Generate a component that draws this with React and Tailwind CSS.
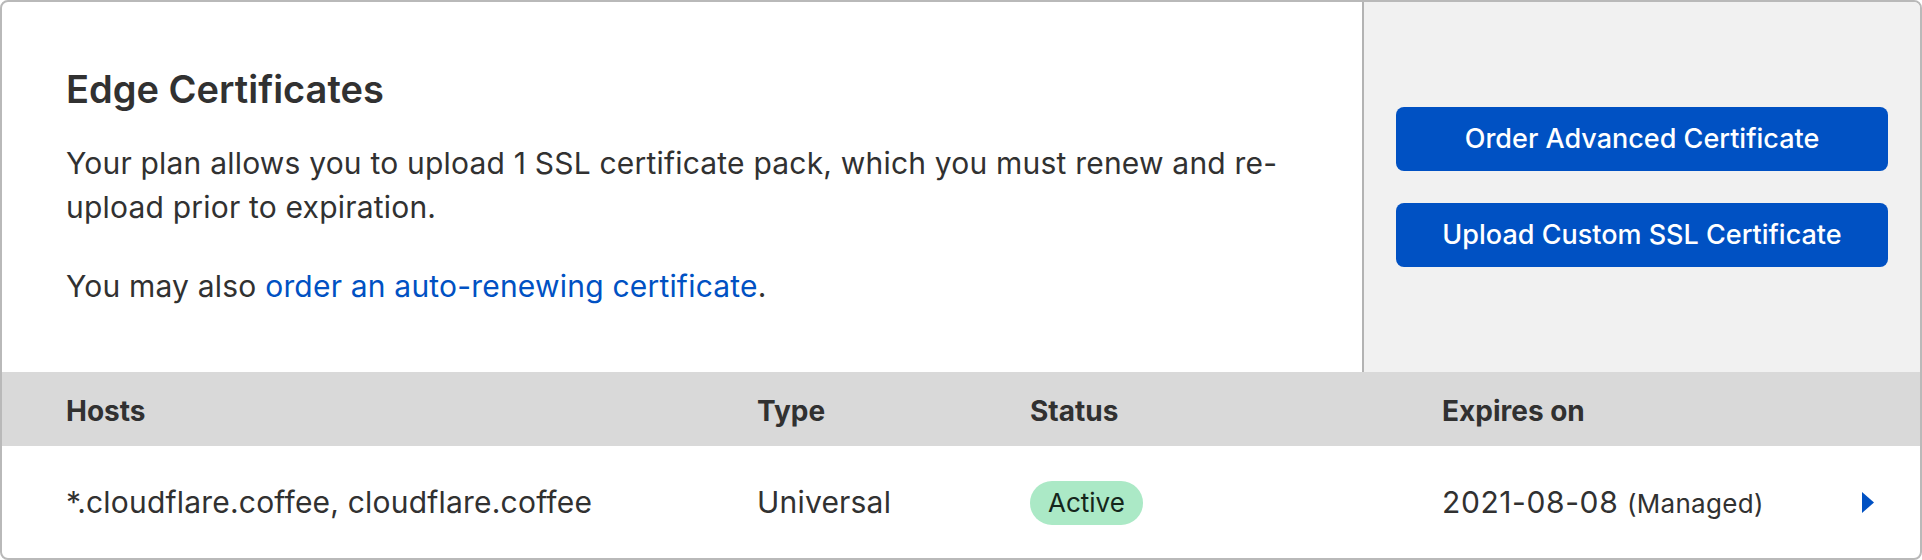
export default function App() {
  return (
    <div className="w-[1922px] h-[560px] bg-white font-['Inter',sans-serif] text-[#313131]">
      <div className="h-[560px] overflow-hidden rounded-[8px] border-2 border-[#b9b9b9] bg-white">
        <div className="flex h-[370px]">
          <div className="flex-1 px-16 pt-16">
            <h1 className="text-[38px] font-semibold leading-[46px]">Edge Certificates</h1>
            <p className="mt-[29px] text-[30px] leading-[44px] tracking-[0.2px]">
              Your plan allows you to upload 1 SSL certificate pack, which you must renew and re-upload prior to expiration.
            </p>
            <p className="mt-[35px] text-[30px] leading-[44px] tracking-[0.2px]">
              You may also <a href="#" className="text-[#0051c3]">order an auto-renewing certificate</a>.
            </p>
          </div>
          <div className="flex w-[558px] flex-col justify-center gap-8 border-l-2 border-[#b3b3b3] bg-[#f1f1f1] px-8">
            <button className="h-[64px] rounded-[8px] bg-[#0051c3] text-[27px] font-medium text-white">
              Order Advanced Certificate
            </button>
            <button className="h-[64px] rounded-[8px] bg-[#0051c3] text-[27px] font-medium text-white">
              Upload Custom SSL Certificate
            </button>
          </div>
        </div>
        <div className="grid h-[74px] grid-cols-[691px_273px_412px_1fr] items-center bg-[#d9d9d9] pl-16 pt-[3px] text-[28px] font-bold">
          <div>Hosts</div>
          <div>Type</div>
          <div>Status</div>
          <div>Expires on</div>
        </div>
        <div className="grid h-[112px] grid-cols-[691px_273px_412px_1fr] items-center pl-16 pr-[46px] text-[30px] tracking-[0.2px]">
          <div>*.cloudflare.coffee, cloudflare.coffee</div>
          <div>Universal</div>
          <div>
            <span className="inline-flex h-[44px] items-center rounded-full bg-[#abe9c6] px-[18px] text-[26px] tracking-normal text-[#15261b]">
              Active
            </span>
          </div>
          <div className="flex items-center justify-between">
            <div>
              <span className="tracking-[0.6px]">2021-08-08</span>{" "}
              <span className="text-[26px] tracking-[0.3px]">(Managed)</span>
            </div>
            <svg width="12" height="21" viewBox="0 0 12 21">
              <path d="M0 0 L12 10.5 L0 21 Z" fill="#0051c3" />
            </svg>
          </div>
        </div>
      </div>
    </div>
  );
}
